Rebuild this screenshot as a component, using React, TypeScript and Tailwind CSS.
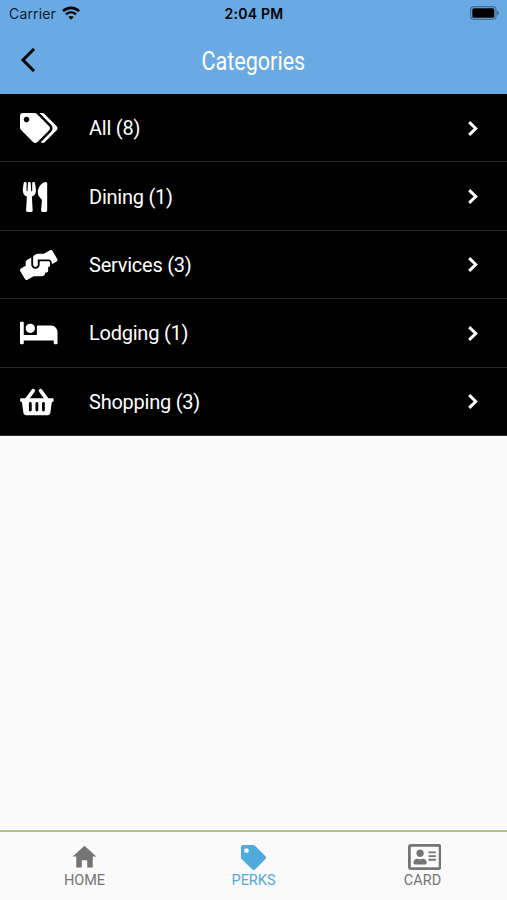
import { FC } from 'react'
import { IconType } from 'react-icons'
import { FaBed, FaHandsHelping, FaRegAddressCard, FaShoppingBasket, FaTag, FaTags, FaUtensils } from 'react-icons/fa'
import { IoMdHome } from 'react-icons/io'

interface Category {
  name: string
  count: number
  icon: IconType
  iconClass: string
}

const categories: Category[] = [
  { name: 'All', count: 8, icon: FaTags, iconClass: 'w-[37.5px]' },
  { name: 'Dining', count: 1, icon: FaUtensils, iconClass: 'w-[30px]' },
  { name: 'Services', count: 3, icon: FaHandsHelping, iconClass: 'w-[37.5px]' },
  { name: 'Lodging', count: 1, icon: FaBed, iconClass: 'w-[37.5px]' },
  { name: 'Shopping', count: 3, icon: FaShoppingBasket, iconClass: 'w-[33.75px]' },
]

const StatusBar: FC = () => (
  <div className="grid h-[27px] grid-cols-3 items-center pl-[9px] pr-2 font-['Inter',sans-serif] text-black">
    <div className="flex items-center gap-[6px]">
      <span className="text-[14px] tracking-[0.15px] text-[#10202f]">Carrier</span>
      <svg className="mb-0.5 h-[14px] w-[18px]" viewBox="0 0 18 14" fill="none" stroke="currentColor">
        <path d="M1 5.100C5.500 .7 12.500 .7 17 5.100" strokeWidth="2.700" />
        <path d="M4 8.400c2.900-2.700 7.100-2.700 10 0" strokeWidth="2.300" />
        <path d="M9 13.700 6.300 11c1.500-1.400 3.900-1.400 5.400 0z" fill="currentColor" stroke="none" />
      </svg>
    </div>
    <span className="text-center text-[14px] font-semibold tracking-[0.25px]">2:04 PM</span>
    <svg className="mb-0.5 h-[14px] w-[29px] justify-self-end" viewBox="0 0 29 14">
      <rect x=".6" y=".6" width="25.400" height="12.800" rx="3.500" fill="none" stroke="#426c93" strokeWidth="1.200" />
      <rect x="2.300" y="2.300" width="22" height="9.400" rx="1.500" fill="#000" />
      <path d="M27 4.500c2.400 1 2.400 4 0 5z" fill="#426c93" />
    </svg>
  </div>
)

const App: FC = () => {
  return (
    <div className="flex h-[900px] w-[507px] flex-col bg-[#fafafa] font-['Roboto',sans-serif]">
      <header className="h-[94px] bg-[#69aae5]">
        <StatusBar />
        <div className="grid h-[66px] grid-cols-[1fr_auto_1fr] items-center px-5">
          <svg className="h-6 w-4" viewBox="0 0 16 24" fill="none" stroke="#000" strokeWidth="3">
            <path d="M14 1 3 12l11 11" />
          </svg>
          <h1 className="flex w-[104px] justify-center whitespace-nowrap pt-0.5 text-[25.5px] leading-8 text-white">
            <span className="scale-x-[0.845]">Categories</span>
          </h1>
        </div>
      </header>

      {/* Category list */}
      <ul className="bg-black">
        {categories.map(({ name, count, icon: Icon, iconClass }) => (
          <li key={name} className="flex h-[68.4px] items-center border-b border-[#292929] pl-5 pr-[29px] pt-px text-white">
            <div className="w-[69px]">
              <Icon className={`h-[30px] ${iconClass}`} />
            </div>
            <span className="flex-1 text-[20px] tracking-[-0.24px]">
              {name} ({count})
            </span>
            <svg className="h-[15px] w-[10px]" viewBox="0 0 10 15" fill="none" stroke="currentColor" strokeWidth="3">
              <path d="M1.200 1.200 7.700 7.500l-6.500 6.300" />
            </svg>
          </li>
        ))}
      </ul>

      {/* Bottom tabs */}
      <nav className="mt-auto grid h-[70px] grid-cols-3 border-t-2 border-[#b2c184] text-[14.5px] text-[#757575]">
        <div className="flex flex-col items-center pt-[11px]">
          <div className="flex h-[29px] items-center">
            <IoMdHome className="mb-[3px] size-[29px]" />
          </div>
          <span className="leading-[18px]">HOME</span>
        </div>
        <div className="flex flex-col items-center pt-[11px] text-[#50aadd]">
          <div className="flex h-[29px] items-center">
            <FaTag className="size-[25px]" />
          </div>
          <span className="leading-[18px]">PERKS</span>
        </div>
        <div className="flex flex-col items-center pt-[11px]">
          <div className="flex h-[29px] items-center">
            <FaRegAddressCard className="mb-0.5 ml-1 h-[30px] w-[33.5px]" />
          </div>
          <span className="leading-[18px]">CARD</span>
        </div>
      </nav>
    </div>
  )
}

export default App
